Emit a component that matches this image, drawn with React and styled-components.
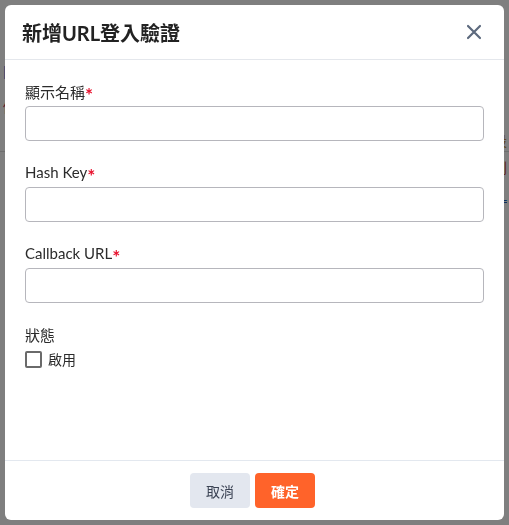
import React from 'react';
import styled, { createGlobalStyle } from 'styled-components';

const GlobalStyle = createGlobalStyle`
  html, body {
    margin: 0;
    padding: 0;
    background: #fff;
    font-family: "Lato", "Noto Sans CJK TC", sans-serif;
  }
  * { box-sizing: border-box; }
`;

// the page that sits behind the dialog, only its edges peek out
const Page = styled.div`
  width: 509px;
  height: 525px;
  padding-top: 58px;
  display: flex;
  flex-direction: column;
  font-size: 14px;
`;

const PageRow = styled.div`
  display: flex;
  justify-content: space-between;
  align-items: center;
  height: ${p => p.h || 24}px;
  padding: 0 2px 0 3px;
  border-bottom: ${p => (p.line ? '1px solid #ddd' : 'none')};
`;

const Frag = styled.span`
  color: ${p => p.color || '#333'};
  text-decoration: ${p => (p.underline ? 'underline' : 'none')};
`;

const Overlay = styled.div`
  position: fixed;
  inset: 0;
  background: rgba(0, 0, 0, 0.5);
  display: flex;
  align-items: center;
  justify-content: center;
`;

const Dialog = styled.div`
  width: 499px;
  height: 515px;
  background: #fff;
  border-radius: 6px;
  display: flex;
  flex-direction: column;
  overflow: hidden;
`;

const Header = styled.div`
  height: 55px;
  flex-shrink: 0;
  display: flex;
  align-items: center;
  justify-content: space-between;
  padding: 0 22px 0 17px;
  border-bottom: 1px solid #e4e7ec;
`;

const Title = styled.h2`
  margin: 0;
  font-size: 20px;
  font-weight: 700;
  color: #222;
`;

const CloseButton = styled.button`
  border: none;
  background: none;
  padding: 0;
  width: 16px;
  height: 16px;
  display: flex;
  cursor: pointer;
  color: #5d6a7e;
`;

const Body = styled.div`
  flex: 1;
  padding: 21px 20px 0;
  display: flex;
  flex-direction: column;
`;

const Field = styled.div`
  display: flex;
  flex-direction: column;
  gap: 5px;
  margin-bottom: 21px;
`;

const Label = styled.label`
  display: flex;
  align-items: center;
  height: 20px;
  font-size: 15px;
  color: #2b2b2b;
`;

const Req = styled.span`
  color: #e8112d;
  font-size: 19px;
  font-weight: 700;
  line-height: 1;
  transform: translateY(3px);
`;

const Input = styled.input`
  height: 35px;
  width: 100%;
  border: 1px solid #b6b6bc;
  border-radius: 4px;
  padding: 0 10px;
  font-size: 15px;
  font-family: inherit;
  outline: none;
`;

const CheckRow = styled.label`
  display: flex;
  align-items: center;
  gap: 6px;
  margin-top: 5px;
  font-size: 14px;
  color: #2b2b2b;
  cursor: pointer;
`;

const Box = styled.span`
  width: 17px;
  height: 17px;
  border: 2px solid #6a6a6a;
  border-radius: 2px;
  background: #fff;
`;

const Footer = styled.div`
  height: 60px;
  flex-shrink: 0;
  border-top: 1px solid #e3e8ef;
  display: flex;
  align-items: center;
  justify-content: center;
  gap: 5px;
  padding-right: 4px;
`;

const Button = styled.button`
  width: 60px;
  height: 35px;
  border: none;
  border-radius: 4px;
  font-family: inherit;
  font-size: 14px;
  font-weight: ${p => (p.primary ? 700 : 400)};
  background: ${p => (p.primary ? '#ff632a' : '#e3e7ef')};
  color: ${p => (p.primary ? '#fff' : '#3b4354')};
  cursor: pointer;
`;

const fields = [
  { label: '顯示名稱' },
  { label: 'Hash Key' },
  { label: 'Callback URL' },
];

export default function App() {
  return (
    <>
      <GlobalStyle />
      <Page>
        <PageRow h={26}>
          <Frag color="#2f7dd1">|</Frag>
          <Frag />
        </PageRow>
        <PageRow h={44}>
          <Frag color="#b0245a">修</Frag>
          <Frag />
        </PageRow>
        <PageRow h={24} line>
          <Frag />
          <Frag color="#c28a3a">設</Frag>
        </PageRow>
        <PageRow h={30}>
          <Frag />
          <Frag color="#c2452f">刪</Frag>
        </PageRow>
        <PageRow h={26}>
          <Frag />
          <Frag color="#1d5fb8" underline>L</Frag>
        </PageRow>
      </Page>
      <Overlay>
        <Dialog>
          <Header>
            <Title>新增URL登入驗證</Title>
            <CloseButton aria-label="close">
              <svg width="16" height="16" viewBox="0 0 16 16">
                <path d="M2 2L14 14M14 2L2 14" stroke="currentColor" strokeWidth="2.2" strokeLinecap="round" />
              </svg>
            </CloseButton>
          </Header>
          <Body>
            {fields.map(f => (
              <Field key={f.label}>
                <Label>
                  {f.label}
                  <Req>*</Req>
                </Label>
                <Input />
              </Field>
            ))}
            <Label>狀態</Label>
            <CheckRow>
              <Box />
              啟用
            </CheckRow>
          </Body>
          <Footer>
            <Button>取消</Button>
            <Button primary>確定</Button>
          </Footer>
        </Dialog>
      </Overlay>
    </>
  );
}
